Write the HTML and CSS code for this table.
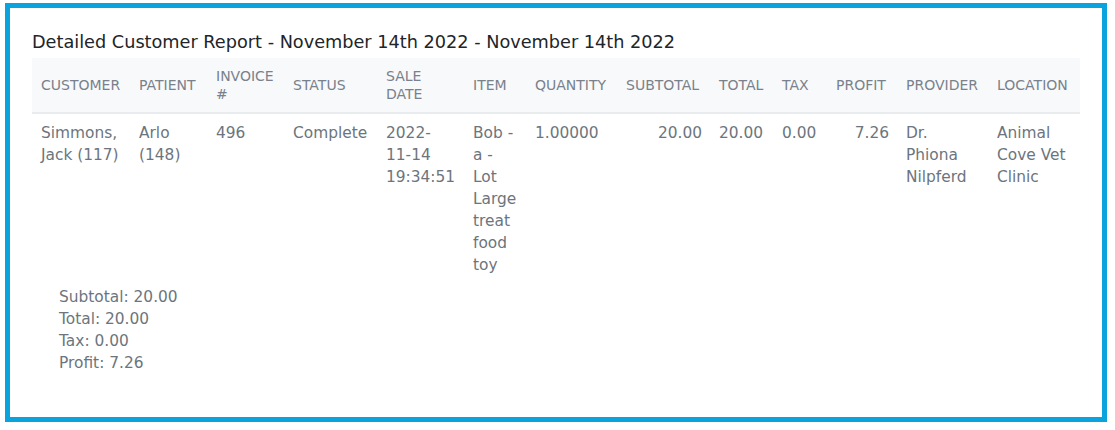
FILE: index.html
```html
<!DOCTYPE html>
<html>
<head>
<meta charset="utf-8">
<link rel="stylesheet" href="styles.css">
</head>
<body>
<div class="frame">
  <h1 class="title">Detailed Customer Report - November 14th 2022 - November 14th 2022</h1>
  <table class="report">
    <colgroup>
      <col style="width:98px"><col style="width:77px"><col style="width:77px"><col style="width:93px"><col style="width:87px"><col style="width:62px"><col style="width:91px"><col style="width:93px"><col style="width:63px"><col style="width:54px"><col style="width:70px"><col style="width:91px"><col style="width:92px">
    </colgroup>
    <thead>
      <tr>
        <th>Customer</th>
        <th>Patient</th>
        <th>Invoice #</th>
        <th>Status</th>
        <th>Sale Date</th>
        <th>Item</th>
        <th>Quantity</th>
        <th>Subtotal</th>
        <th>Total</th>
        <th>Tax</th>
        <th>Profit</th>
        <th>Provider</th>
        <th>Location</th>
      </tr>
    </thead>
    <tbody>
      <tr>
        <td>Simmons, Jack (117)</td>
        <td>Arlo (148)</td>
        <td>496</td>
        <td>Complete</td>
        <td>2022- <span class="nowrap">11-14</span> 19:34:51</td>
        <td>Bob - a - Lot Large treat food toy</td>
        <td>1.00000</td>
        <td class="num">20.00</td>
        <td>20.00</td>
        <td>0.00</td>
        <td class="num">7.26</td>
        <td>Dr. Phiona Nilpferd</td>
        <td>Animal Cove Vet Clinic</td>
      </tr>
    </tbody>
  </table>
  <div class="summary">
    <div>Subtotal: 20.00</div>
    <div>Total: 20.00</div>
    <div>Tax: 0.00</div>
    <div>Profit: 7.26</div>
  </div>
</div>
</body>
</html>
```
FILE: styles.css
```css
html, body {
  margin: 0;
  padding: 0;
  background: #fff;
}
body {
  font-family: "DejaVu Sans", Verdana, sans-serif;
}
.frame {
  margin: 3px 8px 8px 5px;
  height: 419px;
  box-sizing: border-box;
  border: 5px solid #0aa3dd;
  padding: 24px 22px 0 22px;
}
.title {
  margin: 0 0 6px 0;
  font-size: 17.7px;
  font-weight: normal;
  line-height: 20px;
  color: #212529;
}
.report {
  width: 1048px;
  table-layout: fixed;
  border-collapse: collapse;
}
.report th {
  background: #f8f9fa;
  color: #79818c;
  font-size: 14px;
  font-weight: normal;
  text-transform: uppercase;
  text-align: left;
  vertical-align: middle;
  line-height: 18px;
  padding: 9px 8px 9px 9px;
  border-bottom: 2px solid #e9ecef;
}
.report td {
  color: #6c757d;
  font-size: 15.4px;
  line-height: 22px;
  vertical-align: top;
  text-align: left;
  padding: 8px 8px 8px 9px;
}
.report td.num {
  text-align: right;
}
.nowrap {
  white-space: nowrap;
}
.summary {
  padding: 2px 0 0 27px;
  color: #6c757d;
  font-size: 15.4px;
  line-height: 22px;
}
```
